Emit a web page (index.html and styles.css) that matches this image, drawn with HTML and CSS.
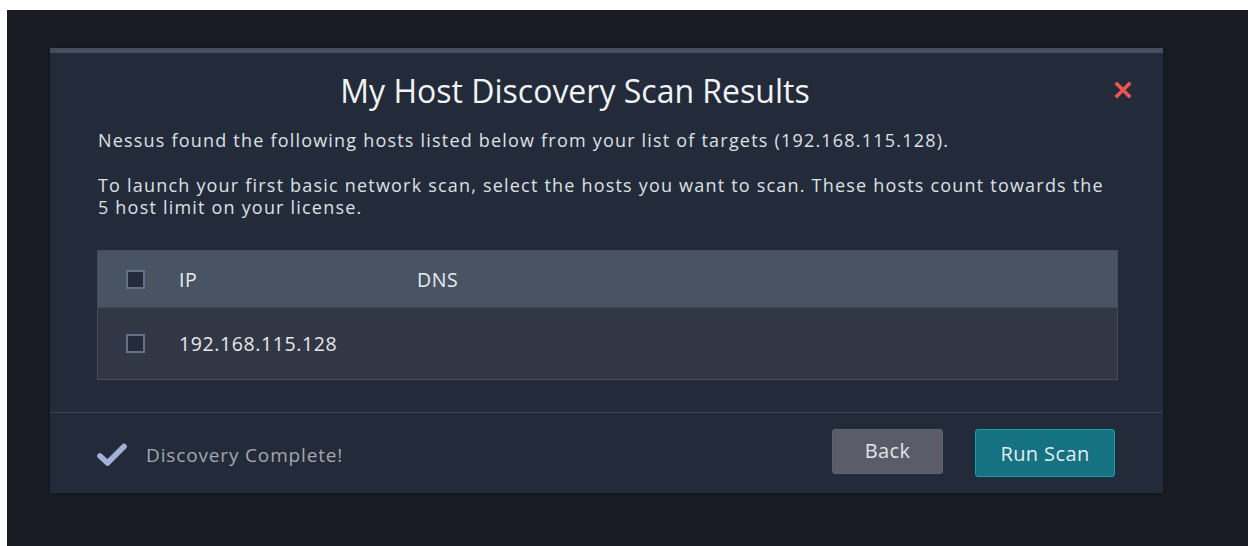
FILE: index.html
```html
<!DOCTYPE html>
<html lang="en">
<head>
<meta charset="utf-8">
<title>My Host Discovery Scan Results</title>
<link rel="stylesheet" href="styles.css">
</head>
<body>
<div class="backdrop">
  <div class="modal">
    <div class="modal-header">
      <h1 class="modal-title">My Host Discovery Scan Results</h1>
      <button class="close" aria-label="Close">
        <svg width="18" height="18" viewBox="0 0 18 18"><path d="M3 3 L15 15 M15 3 L3 15" stroke="#f25454" stroke-width="3.6" stroke-linecap="square"/></svg>
      </button>
    </div>
    <div class="modal-body">
      <p class="intro">Nessus found the following hosts listed below from your list of targets (192.168.115.128).</p>
      <p class="intro">To launch your first basic network scan, select the hosts you want to scan. These hosts count towards the 5 host limit on your license.</p>
      <div class="hosts">
        <div class="row head">
          <span class="cell check"><span class="box"></span></span>
          <span class="cell ip">IP</span>
          <span class="cell dns">DNS</span>
        </div>
        <div class="row">
          <span class="cell check"><span class="box"></span></span>
          <span class="cell ip">192.168.115.128</span>
          <span class="cell dns"></span>
        </div>
      </div>
    </div>
    <div class="modal-footer">
      <div class="status">
        <svg width="32" height="26" viewBox="0 0 32 26"><path d="M4 14 L11.5 21 L28 4.5" fill="none" stroke="#a0b0d9" stroke-width="5.6" stroke-linecap="round" stroke-linejoin="round"/></svg>
        <span>Discovery Complete!</span>
      </div>
      <div class="actions">
        <button class="btn btn-back">Back</button>
        <button class="btn btn-run">Run Scan</button>
      </div>
    </div>
  </div>
</div>
</body>
</html>
```
FILE: styles.css
```css
html, body {
  margin: 0;
  padding: 0;
  background: #ffffff;
}

body {
  font-family: "Open Sans", "Noto Sans", sans-serif;
  padding: 10px 0 0 7px;
}

.backdrop {
  background: #191c24;
  height: 536px;
  padding: 38px 0 0 43px;
  box-sizing: border-box;
}

.modal {
  width: 1113px;
  background: #232b3a;
  border-top: 5px solid #454f5c;
  box-shadow: 0 0 6px rgba(0, 0, 0, 0.35);
}

/* header: title centred in the space left of the close button */
.modal-header {
  display: flex;
  align-items: flex-start;
  height: 60px;
  padding-top: 16px;
  box-sizing: border-box;
  height: 76px;
}

.modal-title {
  flex: 1;
  margin: 0;
  text-align: center;
  font-weight: 400;
  font-size: 32px;
  line-height: 44px;
  color: #f2f3f5;
}

.close {
  width: 63px;
  background: none;
  border: 0;
  padding: 12px 0 0 14px;
  text-align: left;
  line-height: 0;
}

.modal-body {
  padding: 0 45px 32px 47px;
}

.intro {
  margin: 0 0 23px 1px;
  font-size: 18px;
  letter-spacing: 1.2px;
  line-height: 22px;
  color: #dde0e5;
}

.intro + .intro {
  margin-bottom: 32px;
}

.hosts {
  border: 1px solid #464c5b;
  background: #323745;
}

.row {
  display: flex;
  align-items: center;
  height: 71px;
  font-size: 19.5px;
  letter-spacing: 0.6px;
  color: #e6e8ec;
}

.row.head {
  height: 56px;
  background: #485463;
  border-bottom: 1px solid #404857;
  color: #e9ebee;
}

.cell.check {
  width: 81px;
  display: flex;
  padding-left: 28px;
  box-sizing: border-box;
}

.box {
  width: 15px;
  height: 15px;
  border: 2px solid #627188;
  background: #232b3a;
}

.cell.ip {
  width: 238px;
}

.modal-footer {
  border-top: 1px solid #3a4253;
  height: 80px;
  display: flex;
  align-items: center;
  justify-content: space-between;
  padding: 0 48px 0 46px;
}

.status {
  display: flex;
  align-items: center;
  gap: 18px;
  font-size: 19px;
  letter-spacing: 0.85px;
  color: #a2a6ad;
  margin-top: 3px;
}

.actions {
  display: flex;
  align-items: flex-start;
  gap: 32px;
  height: 48px;
}

.btn {
  font-family: "Open Sans", "Noto Sans", sans-serif;
  font-size: 20px;
  letter-spacing: 0.4px;
  border-radius: 3px;
  padding: 0;
  cursor: pointer;
}

.btn-back {
  width: 111px;
  height: 45px;
  background: #5a5d69;
  border: 1px solid #5f626e;
  color: #e3e4e7;
  padding-bottom: 2px;
}

.btn-run {
  width: 140px;
  height: 48px;
  background: #147281;
  border: 1px solid #1a9dad;
  color: #e2edef;
}
```
